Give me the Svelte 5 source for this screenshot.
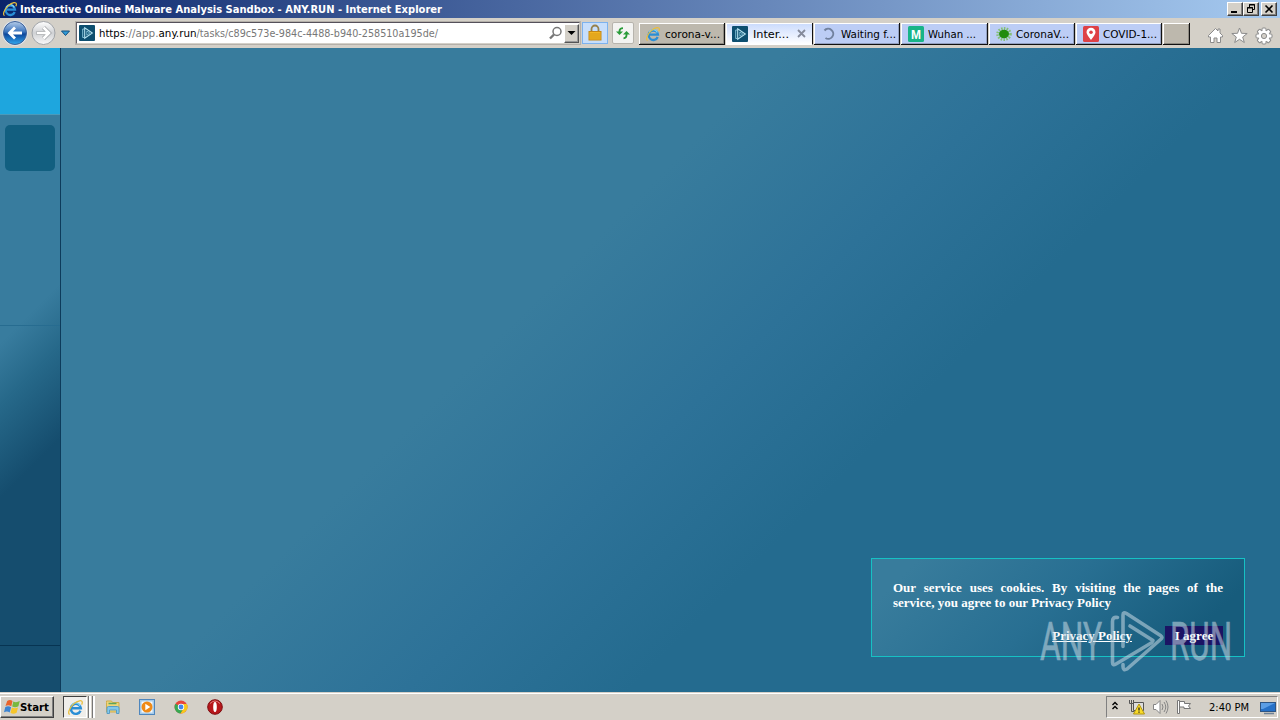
<script>
  const tabs = [
    { label: 'corona-v...', icon: 'ie', kind: 'plain', w: 55 },
    { label: 'Inter...', icon: 'any', kind: 'active', w: 36 },
    { label: 'Waiting f...', icon: 'load', kind: 'blue', w: 55 },
    { label: 'Wuhan ...', icon: 'm', kind: 'blue', w: 48 },
    { label: 'CoronaV...', icon: 'virus', kind: 'blue', w: 53 },
    { label: 'COVID-1...', icon: 'pin', kind: 'blue', w: 54 }
  ];
</script>

{#snippet label(text, w, color = '#000', bold = false)}
  <svg class="label" class:bold width={w} height="16" viewBox="0 0 {w} 16">
    <text x="0" y="12" fill={color} textLength={w} lengthAdjust="spacingAndGlyphs">{text}</text>
  </svg>
{/snippet}

{#snippet ie(s)}
  <svg width={s} height={s} viewBox="0 0 16 16" fill="none">
    <path d="M12.700 11A4.700 4.700 0 1 1 13 8.700H4.500" stroke="#2a8ed6" stroke-width="2.300" />
    <path d="M12.300 6.500A4.400 4.400 0 0 0 4.300 6" stroke="#7bd2f8" stroke-width="1.200" />
    <path d="M2.600 14.500C.2 14 2.200 8.300 6.300 4.600 10.100 1.200 14.600.6 14.400 3.400c0 .7-.3 1.300-.6 1.900" stroke="#e9be3c" stroke-width="1.200" />
  </svg>
{/snippet}

{#snippet anyrun()}
  <svg width="16" height="16" viewBox="0 0 16 16" fill="none">
    <rect width="16" height="16" rx="1" fill="#0d4f70" />
    <path d="M5.500 4H3.700v8.500h1.500" stroke="#7fbdd4" />
    <path d="M5.700 2.800v10.400L13.300 8z" stroke="#b5e2f0" stroke-width="1.100" />
    <path d="M7.800 6v4.200L10.800 8z" stroke="#7fbdd4" stroke-width=".9" />
  </svg>
{/snippet}

<div class="screen">
  <header class="title">
    {@render ie(16)}
    {@render label('Interactive Online Malware Analysis Sandbox - ANY.RUN - Internet Explorer', 422, '#fff', true)}
    <div class="winbtns">
      <span><svg width="14" height="12"><path d="M3 9h6" stroke="#000" stroke-width="2" /></svg></span>
      <span><svg width="14" height="12" fill="none" stroke="#000"><path d="M5.500 4V1.500h5v5H9M5 2h6" /><path d="M3.500 4.500h5v5h-5zM3 5h6" /></svg></span>
      <span class="gap"><svg width="14" height="12"><path d="M3.500 2.500l7 7m0-7l-7 7" stroke="#000" stroke-width="1.600" /></svg></span>
    </div>
  </header>

  <nav class="toolbar">
    <svg class="nav" width="74" height="28" viewBox="0 0 74 28">
      <defs>
        <linearGradient id="back" x1="0" y1="0" x2="0" y2="1">
          <stop offset="0" stop-color="#b6cdea" /><stop offset=".45" stop-color="#3b74bd" />
          <stop offset=".55" stop-color="#0d479c" /><stop offset="1" stop-color="#31aaf0" />
        </linearGradient>
        <linearGradient id="fwd" x1="0" y1="0" x2="0" y2="1">
          <stop offset="0" stop-color="#fff" /><stop offset=".5" stop-color="#cfd1d4" /><stop offset="1" stop-color="#fafafa" />
        </linearGradient>
      </defs>
      <circle cx="15" cy="14" r="12.600" fill="#e7edf5" />
      <circle cx="15" cy="14" r="11.500" fill="url(#back)" stroke="#3c5f96" />
      <path d="M22 14H9.500m5.500-5.500L9.500 14l5.500 5.500" fill="none" stroke="#fff" stroke-width="2.800" />
      <circle cx="43.500" cy="14" r="11.500" fill="url(#fwd)" stroke="#a0a3a7" />
      <path d="M36.500 14h12.500m-5.500-5.500L49 14l-5.500 5.500" fill="none" stroke="#a4a7aa" stroke-width="4.200" />
      <path d="M37 14h12m-5.500-5.500L49 14l-5.500 5.500" fill="none" stroke="#fff" stroke-width="2.600" />
      <path d="M61.500 12h8l-4 4.500z" fill="#2f9bd8" stroke="#14507e" />
    </svg>
    <div class="address">
      {@render anyrun()}
      <svg class="label url" width="340" height="16">
        <text x="0" y="12" fill="#000" textLength="26" lengthAdjust="spacingAndGlyphs">https</text>
        <text x="26" y="12" fill="#777" textLength="33.500" lengthAdjust="spacingAndGlyphs">://app.</text>
        <text x="59.500" y="12" fill="#000" textLength="38" lengthAdjust="spacingAndGlyphs">any.run</text>
        <text x="97.500" y="12" fill="#777" textLength="241.500" lengthAdjust="spacingAndGlyphs">/tasks/c89c573e-984c-4488-b940-258510a195de/</text>
      </svg>
      <svg class="search" width="15" height="15" fill="none" stroke="#777"><circle cx="9" cy="5.500" r="4" stroke-width="1.500" /><path d="M6 8.500L2 12.500" stroke-width="2.400" /></svg>
      <span class="drop"><svg width="12" height="14"><path d="M2.500 5h8l-4 4z" /></svg></span>
    </div>
    <div class="lock">
      <svg width="16" height="18" viewBox="0 0 16 18"><path d="M4.500 9V5a3.500 3.500 0 0 1 7 0v4" fill="none" stroke="#96804a" stroke-width="1.800" /><rect x="2" y="7.500" width="12" height="8.500" fill="#f3b624" stroke="#c48717" /><path d="M3 10h10M3 12h10M3 14h10" stroke="#d3961a" stroke-width=".9" /></svg>
    </div>
    <div class="refresh">
      <svg width="18" height="16" viewBox="0 0 18 16" fill="none" stroke="#299b38" stroke-width="1.800"><path d="M5.500 8V6Q5.500 3.200 9 3.200" /><path d="M2 6.500h7L5.500 10z" fill="#299b38" stroke="none" /><path d="M12.500 8v2.300Q12.500 13 9.500 13.300" /><path d="M9 9.500h7L12.500 6z" fill="#299b38" stroke="none" /></svg>
    </div>
    <div class="tabs">
      {#each tabs as t}
        <div class="tab {t.kind}">
          {#if t.icon === 'ie'}{@render ie(16)}
          {:else if t.icon === 'any'}{@render anyrun()}
          {:else if t.icon === 'load'}
            <svg width="16" height="16" fill="none" stroke="#71819e" stroke-width="2"><path d="M3.500 4.500A5 5 0 1 1 4.500 12" /></svg>
          {:else if t.icon === 'm'}
            <svg width="16" height="16"><rect width="16" height="16" rx="1.500" fill="#18b487" /><text x="8" y="12.500" text-anchor="middle" class="m">M</text></svg>
          {:else if t.icon === 'virus'}
            <svg width="16" height="16"><ellipse cx="8" cy="8" rx="6.300" ry="5.500" fill="none" stroke="#85bf76" stroke-width="3" stroke-dasharray="1.500 1.200" /><ellipse cx="8" cy="8" rx="5" ry="4.200" fill="#218c0e" /></svg>
          {:else}
            <svg width="16" height="16"><rect width="16" height="16" rx="1.500" fill="#de4146" /><path d="M8 14Q3.500 8.500 3.500 6.300a4.500 4.500 0 0 1 9 0Q12.500 8.500 8 14z" fill="#fff" /><circle cx="8" cy="6.300" r="1.800" fill="#de4146" /></svg>
          {/if}
          {@render label(t.label, t.w)}
          {#if t.kind === 'active'}
            <svg class="close" width="9" height="9"><path d="M1 1l7 7m0-7L1 8" stroke="#858b9b" stroke-width="1.800" /></svg>
          {/if}
        </div>
      {/each}
      <div class="tab plain new"></div>
    </div>
    <div class="tools">
      <svg width="17" height="17" viewBox="0 0 17 17"><path d="M8.500 1.500l-7 7v1.500h2v5.500h3.500v-4.500h3v4.500h3.500v-5.500h2v-1.500l-2.500-2.500v-4h-2v2z" fill="#fff" stroke="#8b8b8b" /></svg>
      <svg width="17" height="17" viewBox="0 0 17 17"><path d="M8.500 1l2 5.300 5.700.2-4.500 3.500 1.600 5.500-4.800-3.200-4.800 3.200 1.600-5.500L.8 6.500l5.700-.2z" fill="#fff" stroke="#8b8b8b" /></svg>
      <svg width="18" height="18" viewBox="-9 -9 18 18">
        {#each [0, 45, 90, 135] as a}<rect x="-2" y="-8" width="4" height="16" rx="1" transform="rotate({a})" fill="#fff" stroke="#8b8b8b" />{/each}
        <circle r="5.600" fill="#fff" /><circle r="2.600" fill="#d4d0c8" stroke="#8b8b8b" />
      </svg>
    </div>
  </nav>

  <main>
    <aside>
      <div class="brand"></div>
      <div class="item"></div>
      <div class="middle"></div>
      <div class="lower"></div>
    </aside>
    <section>
      <div class="cookie">
        <p>Our service uses cookies. By visiting the pages of the service, you agree to our Privacy Policy</p>
        <div class="actions"><span class="policy">Privacy Policy</span><span class="agree">I agree</span></div>
      </div>
      <svg class="mark" width="210" height="66" viewBox="0 0 210 66">
        <text x="4" y="52" textLength="62" lengthAdjust="spacingAndGlyphs">ANY</text>
        <text x="134" y="52" textLength="62" lengthAdjust="spacingAndGlyphs">RUN</text>
        <g transform="translate(0 -2.500)" fill="none" stroke-width="3.600" stroke-linejoin="round" stroke-linecap="round">
          <path d="M81.500 12q-5-1-5 4v41q0 3.500 3.500 1.500l36-21.500" />
          <path d="M87 41V9.500q0-3.500 3.500-1.500l34 22q3 2 0 4L91 63.500q-4 2-4-2.500v-2" />
          <path d="M94 20.500l23 14.500" />
        </g>
      </svg>
    </section>
  </main>

  <footer>
    <div class="start">
      <svg width="16" height="16" viewBox="0 0 16 16"><path d="M3.200 2Q6 0 8.500 2L7.300 7.300Q4.500 5.300 1.500 7z" fill="#e9632b" /><path d="M9.300 2.500q3 1.500 6.500-.5l-1.400 5.200q-3.200 1.800-6.200.2z" fill="#78b83e" /><path d="M1.300 8q3-1.700 5.800.2L5.700 13.500q-2.500-1.800-5.700-.2z" fill="#3c84d2" /><path d="M7.900 8.500q2.800 1.600 6.100 0l-1.400 5.300q-3.300 1.700-6.100 0z" fill="#f6c52b" /></svg>
      {@render label('Start', 29, '#000', true)}
    </div>
    <div class="running">{@render ie(17)}</div>
    <i class="bar"></i><i class="bar second"></i>
    <div class="quick">
      <svg width="16" height="16"><path d="M1.500 3.500V2h5l1 1.500h6.500V13h-12.500z" fill="#efd579" stroke="#cfac4a" /><path d="M3.500 4.500h8" stroke="#5ca65c" stroke-width="1.500" /><path d="M2 14.500V9q0-1.500 1.500-1.500h9Q14 7.500 14 9v5.500h-2.500V11h-7v3.500z" fill="#83c8ea" stroke="#579cc5" /></svg>
      <svg width="16" height="16"><rect x=".5" y=".5" width="15" height="15" fill="#a5cbea" stroke="#4e86bd" /><rect x="2.500" y="2.500" width="11" height="11" fill="#f7fafd" /><circle cx="8" cy="8" r="5.500" fill="#ef8a17" /><path d="M6.300 4.800v6.400L11.300 8z" fill="#fff" /></svg>
      <svg width="16" height="16" viewBox="-1 -1 16 16"><circle cx="7" cy="7" r="6.500" fill="#e8453a" /><path d="M7 7L1.400 3.800A6.500 6.500 0 0 0 6.500 13.500L9.800 8.600z" fill="#37a852" /><path d="M7 4h5.800A6.500 6.500 0 0 1 6.500 13.500L9.600 8.500z" fill="#f8c81c" /><circle cx="7" cy="7" r="3.200" fill="#fff" /><circle cx="7" cy="7" r="2.400" fill="#4385ec" /></svg>
      <svg width="16" height="16"><circle cx="8" cy="8" r="7.300" fill="#b7171b" stroke="#7e0c10" /><path d="M3 4.500Q8-.5 13 4.500" stroke="#e37d7d" fill="none" /><ellipse cx="8" cy="8" rx="1.800" ry="5" fill="#fff" /></svg>
    </div>
    <div class="tray">
      <svg class="chev" width="8" height="10" fill="none" stroke="#000" stroke-width="1.400"><path d="M1.500 4L4 1.500 6.500 4M1.500 8L4 5.500 6.500 8" /></svg>
      <svg class="net" width="17" height="16"><path d="M5.500 3.500h10v8h-10z" fill="#ddd" stroke="#555" /><path d="M8 14.500h6" stroke="#555" /><path d="M1.500 1v3.500h4V1M3.500 1v11.500h3" fill="none" stroke="#555" /><path d="M11 5l5.500 10H5.500z" fill="#f9db28" stroke="#b19412" /><path d="M11 8.500v3m0 1v1.200" stroke="#222" stroke-width="1.300" /></svg>
      <svg class="sound" width="17" height="16" fill="none" stroke="#858585"><path d="M1.500 5.500h2.500l4-4v13l-4-4H1.500z" fill="#fff" /><path d="M10 5q2 3 0 6M12 3q3.500 5 0 10M14 1.500q4 6.500 0 13" /></svg>
      <svg class="flag" width="16" height="16" fill="#fff" stroke="#777"><path d="M1.500 1.500h2v13h-2zM3.500 2.500h5v2h6l-2 2.500 2 2.500H8v-1.500H3.500z" /></svg>
      {@render label('2:40 PM', 40)}
      <svg class="desktop" width="16" height="14"><rect x=".5" y="1.500" width="15" height="9" fill="#2671c7" stroke="#2d5584" /><path d="M1 2h14L3 8H1z" fill="#5b9ee5" /><path d="M4 12.500h10" stroke="#6d8196" stroke-width="1.500" /></svg>
    </div>
  </footer>
</div>

<style>
  :global(body) { margin: 0; overflow: hidden; }
  * { box-sizing: border-box; }
  svg { display: block; flex: none; }
  .screen { width: 1280px; height: 720px; display: flex; flex-direction: column; background: #d4d0c8; overflow: hidden; }
  .label { font: 11px "DejaVu Sans Condensed", "DejaVu Sans", sans-serif; overflow: visible; }
  .label.bold { font-weight: 700; }
  .title { height: 18px; flex: none; display: flex; align-items: center; gap: 2px; padding: 0 3px 0 2px; background: linear-gradient(90deg, #0a246a, #a6caf0); }
  .winbtns { display: flex; margin-left: auto; }
  .winbtns span { width: 16px; height: 14px; background: #d4d0c8; border: 1px solid; border-color: #fff #404040 #404040 #fff; box-shadow: inset -1px -1px #808080; }
  .winbtns .gap { margin-left: 2px; }
  .toolbar { height: 30px; flex: none; display: flex; align-items: flex-start; padding-top: 1px; }
  .nav { margin-right: 2px; }
  .address { width: 504px; height: 22px; margin-top: 3px; padding-left: 2px; display: flex; align-items: center; background: #fff; border: 1px solid; border-color: #55505a #d4d0c8 #d4d0c8 #66626a; box-shadow: 0 0 0 1px #b4b0aa; }
  .url { margin: 0 0 0 4px; }
  .search { margin-left: auto; margin-right: 1px; }
  .drop { width: 15px; height: 19px; display: flex; align-items: center; background: #d4d0c8; border: 1px solid; border-color: #fff #555 #555 #fff; box-shadow: inset -1px -1px #999; }
  .lock { width: 26px; height: 22px; margin: 3px 0 0 2px; display: flex; align-items: center; justify-content: center; background: #c7defb; border: 1px solid #7db2ee; }
  .refresh { width: 22px; height: 22px; margin: 3px 0 0 4px; display: flex; align-items: center; justify-content: center; background: #f3f3f1; border: 1px solid #b7b4ad; border-radius: 2px; }
  .tabs { display: flex; gap: 1px; margin: 4px 0 0 5px; }
  .tab { width: 86.400px; height: 22px; padding: 0 0 0 6px; display: flex; align-items: center; gap: 3px; border: solid #111; border-width: 0 1.500px 1.500px 0; box-shadow: inset 1px 1px #fff; }
  .plain { background: #bdb8ad; box-shadow: inset 1px 1px #fff, inset -1px -1px #8f8b82; }
  .plain .label { margin-left: 1px; }
  .blue { background: #bccdf5; padding-left: 7px; gap: 4px; box-shadow: inset 1px 1px #fff, inset -1px -1px #93a0c0; }
  .active { background: linear-gradient(#c9dafd, #fff); border-bottom-color: #fff; }
  .active .label { margin-left: 2px; }
  .close { margin-left: 5px; }
  .new { width: 27px; }
  .m { font: 700 12px "Liberation Sans", sans-serif; fill: #fff; }
  .tools { display: flex; margin: 8px 7px 0 auto; gap: 7px; }
  main { height: 644px; flex: none; display: flex; }
  aside { width: 61px; border-right: 1px solid #0d3b5b; display: flex; flex-direction: column; background: linear-gradient(135deg, #387c9e 42%, #266889 51%, #154d6e 64%); }
  .brand { height: 67px; background: #1ea6de; border-bottom: 1px solid #4a9abb; }
  .item { width: 50px; height: 46px; margin: 10px 5px; border-radius: 5px; background: #125f80; }
  .middle { height: 145px; border-bottom: 1px solid #276c90; }
  .lower { height: 320px; border-bottom: 1px solid #073452; }
  section { flex: 1; position: relative; display: flex; justify-content: flex-end; align-items: flex-end; padding: 0 35px 35px 0; background: linear-gradient(135deg, #387c9d 39%, #2d7298 53%, #246b8f 65%); }
  .cookie { width: 374px; height: 99px; padding: 21px 21px 0; border: 1px solid #16c1c4; color: #fff; font: 700 13px/15px "Liberation Serif", serif; background: linear-gradient(135deg, #387c9c 10%, #286f92 48%, #175c7c 85%); }
  p { margin: 0; text-align: justify; }
  .actions { display: flex; justify-content: flex-end; align-items: center; margin-top: 16px; }
  .policy { text-decoration: underline; margin-right: 33px; }
  .agree { width: 58px; height: 19px; padding-top: 2px; text-align: center; background: #1b1464; }
  .mark { position: absolute; left: 975px; top: 560px; opacity: .55; }
  .mark g { stroke: #c9dbe5; }
  .mark text { fill: #c9dbe5; stroke: #c9dbe5; stroke-width: .6; font: 400 53px Roboto, sans-serif; }
  footer { height: 28px; flex: none; display: flex; align-items: center; border-top: 1px solid #d4d0c8; box-shadow: inset 0 1px #fff; padding-top: 1px; }
  .start { width: 54px; height: 22px; padding-left: 3px; display: flex; align-items: center; gap: 0; border: 1px solid; border-color: #fff #404040 #404040 #fff; box-shadow: inset -1px -1px #808080; }
  .running { width: 24px; height: 22px; margin-left: 9px; padding: 2px 0 0 3px; background: #f0eeea; border: 1px solid; border-color: #404040 #fff #fff #404040; }
  .bar { width: 3px; height: 22px; margin-left: 1px; border-right: 2px solid #fff; border-left: 1px solid #777; }
  .quick { display: flex; align-items: center; gap: 18px; margin-left: 10px; }
  .tray { margin: 0 2px 0 auto; width: 172px; height: 22px; display: flex; align-items: center; border: 1px solid; border-color: #808080 #fff #fff #808080; }
  .chev { margin: -2px 0 0 4px; }
  .net { margin-left: 9px; }
  .sound { margin-left: 7px; }
  .flag { margin: 0 17px 0 7px; }
  .desktop { margin: 1px 0 0 11px; }
</style>
